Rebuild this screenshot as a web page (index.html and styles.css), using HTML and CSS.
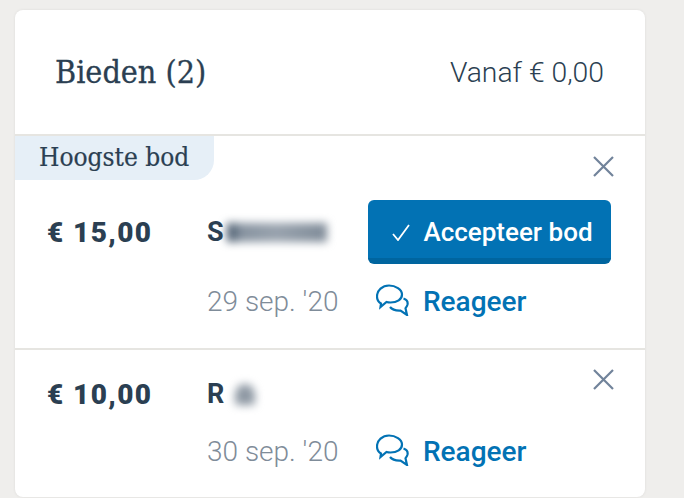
FILE: index.html
```html
<!DOCTYPE html>
<html lang="nl">
<head>
<meta charset="utf-8">
<title>Bieden</title>
<link rel="stylesheet" href="styles.css">
</head>
<body>
<section class="card">
  <header class="head">
    <h2 class="title">Bieden (2)</h2>
    <span class="from">Vanaf € 0,00</span>
  </header>
  <article class="bid bid-top">
    <div class="badge">Hoogste bod</div>
    <svg class="close" viewBox="0 0 21 21"><path d="M1 1 20 20M20 1 1 20"/></svg>
    <div class="row row-main">
      <div class="price">€ 15,00</div>
      <div class="name">S<span class="blur blur-long"></span></div>
      <button class="accept"><svg class="check" viewBox="0 0 18 17"><path d="M1 10 6 16 17 1"/></svg>Accepteer bod</button>
    </div>
    <div class="row row-sub">
      <div class="date">29 sep. '20</div>
      <a class="react"><svg class="chat" viewBox="0 0 33 32"><path d="M5 19.500C2.500 18 1 15.500 1 12.500 1 6 6.500 1.500 13 1.500S26 5.500 26 10.500 21 18.500 14.500 18.500C13 18.500 11.500 18.300 10.500 18L4.500 23Z"/><path d="M27.500 14.500C30.500 15.500 32 18 31.500 20.500 31 22.500 30 23.500 29.500 24.300L31 31 24.500 26.500C20 26.700 16 25.500 14 23"/></svg>Reageer</a>
    </div>
  </article>
  <article class="bid bid-second">
    <svg class="close" viewBox="0 0 21 21"><path d="M1 1 20 20M20 1 1 20"/></svg>
    <div class="row row-main-b">
      <div class="price">€ 10,00</div>
      <div class="name">R<span class="blur blur-short"></span></div>
    </div>
    <div class="row row-sub">
      <div class="date">30 sep. '20</div>
      <a class="react"><svg class="chat" viewBox="0 0 33 32"><path d="M5 19.500C2.500 18 1 15.500 1 12.500 1 6 6.500 1.500 13 1.500S26 5.500 26 10.500 21 18.500 14.500 18.500C13 18.500 11.500 18.300 10.500 18L4.500 23Z"/><path d="M27.500 14.500C30.500 15.500 32 18 31.500 20.500 31 22.500 30 23.500 29.500 24.300L31 31 24.500 26.500C20 26.700 16 25.500 14 23"/></svg>Reageer</a>
    </div>
  </article>
</section>
</body>
</html>
```

FILE: styles.css
```css
* { box-sizing: border-box; }
html, body { margin: 0; height: 100%; }
body {
  background: #efeeec;
  padding: 10px 39px 0 15px;
  overflow: hidden;
  font-family: Roboto, sans-serif;
  color: #2b3f52;
}
.card {
  background: #fff;
  border-radius: 8px;
  height: 487px;
  box-shadow: 0 0 3px rgba(0, 0, 0, .08);
  overflow: hidden;
}
.head {
  height: 126px;
  padding: 0 41px 0 40px;
  display: flex;
  justify-content: space-between;
  align-items: center;
  border-bottom: 2px solid #e6e5e1;
}
.title {
  margin: 0;
  font-family: "DejaVu Serif", serif;
  font-stretch: condensed;
  font-size: 32px;
  font-weight: 400;
  line-height: 1;
  -webkit-text-stroke: .3px #2b3f52;
}
.from { font-size: 28.300px; font-weight: 300; }
.bid { position: relative; }
.bid-top { height: 214px; border-bottom: 2px solid #e6e5e1; }
.bid-second { height: 146px; padding-top: 24px; }
.badge {
  width: 199px;
  height: 44px;
  padding-left: 24px;
  background: #e6eff7;
  border-bottom-right-radius: 20px;
  font-family: "DejaVu Serif", serif;
  font-stretch: condensed;
  font-size: 26px;
  line-height: 42px;
  -webkit-text-stroke: .2px #2b3f52;
}
.close {
  position: absolute;
  right: 31px;
  top: 20px;
  width: 21px;
  height: 21px;
  fill: none;
  stroke: #71839a;
  stroke-width: 2.200;
}
.bid-second .close { top: 19px; }
.row { display: flex; padding-left: 32px; }
.row-main { align-items: center; height: 64px; margin-top: 20px; }
.row-main-b { align-items: center; height: 40px; }
.row-sub { align-items: center; margin-top: 15px; height: 44px; padding-left: 192px; }
.price { width: 160px; font-size: 28px; font-weight: 900; letter-spacing: 1.400px; }
.name { width: 161px; font-size: 27px; font-weight: 700; display: flex; align-items: center; }
.blur { display: inline-block; filter: blur(4px); }
.blur-long {
  width: 100px;
  height: 19px;
  margin-left: 3px;
  background: linear-gradient(90deg, #3d5064 0, #8793a0 14%, #98a2ad 50%, #7f8b98 100%);
}
.blur-short {
  width: 20px;
  height: 21px;
  margin-left: 11px;
  background: #8f99a4;
  border-radius: 50% 50% 15% 15%;
}
.accept {
  display: flex;
  align-items: center;
  justify-content: center;
  width: 243px;
  height: 64px;
  padding: 6px 0 0 6px;
  border: 0;
  border-bottom: 6px solid #00659f;
  border-radius: 6px;
  background: #0272b4;
  color: #fff;
  font: 500 26px Roboto, sans-serif;
}
.check { width: 18px; height: 17px; margin-right: 13px; fill: none; stroke: #fff; stroke-width: 1.800; }
.date { width: 169px; font-size: 28px; font-weight: 300; color: #7f8c99; }
.react { display: flex; align-items: center; gap: 14px; color: #0272b4; font-size: 28px; font-weight: 500; }
.chat { width: 33px; height: 32px; margin-top: -2px; fill: none; stroke: #0272b4; stroke-width: 2.200; }
```
